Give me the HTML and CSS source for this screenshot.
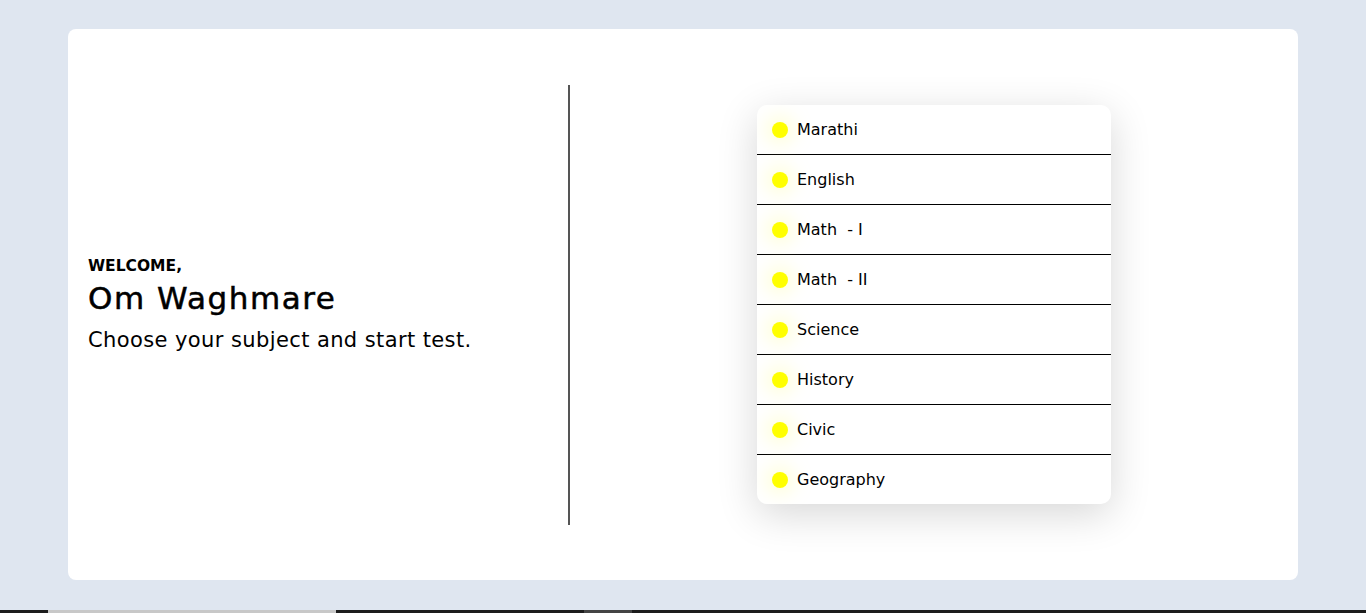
FILE: index.html
```html
<!DOCTYPE html>
<html lang="en">
<head>
<meta charset="utf-8">
<title>Choose subject</title>
<link rel="stylesheet" href="styles.css">
</head>
<body>
<main class="page">
  <section class="card">
    <div class="welcome">
      <h3 class="welcome-label">WELCOME,</h3>
      <h1 class="welcome-name">Om Waghmare</h1>
      <p class="welcome-text">Choose your subject and start test.</p>
    </div>
    <div class="subjects-col">
      <ul class="subjects">
        <li class="subject"><span class="dot"></span><span class="subject-name">Marathi</span></li>
        <li class="subject"><span class="dot"></span><span class="subject-name">English</span></li>
        <li class="subject"><span class="dot"></span><span class="subject-name">Math&nbsp; - I</span></li>
        <li class="subject"><span class="dot"></span><span class="subject-name">Math&nbsp; - II</span></li>
        <li class="subject"><span class="dot"></span><span class="subject-name">Science</span></li>
        <li class="subject"><span class="dot"></span><span class="subject-name">History</span></li>
        <li class="subject"><span class="dot"></span><span class="subject-name">Civic</span></li>
        <li class="subject"><span class="dot"></span><span class="subject-name">Geography</span></li>
      </ul>
    </div>
  </section>
</main>
<div class="taskbar"><span class="tb-seg tb-light"></span><span class="tb-seg tb-gap"></span><span class="tb-seg tb-gray"></span></div>
</body>
</html>
```

FILE: styles.css
```css
* { box-sizing: border-box; }
html, body { margin: 0; padding: 0; }
body {
  background: #dfe6f0;
  font-family: "DejaVu Sans", Inter, sans-serif;
  color: #000;
  height: 613px;
  overflow: hidden;
  position: relative;
}
.page {
  padding-top: 29px;
  display: flex;
  justify-content: center;
}
.card {
  width: 1230px;
  height: 551px;
  background: #fff;
  border-radius: 8px;
  display: flex;
  align-items: center;
}
.welcome {
  width: 500px;
  padding-left: 20px;
}
.welcome-label {
  margin: 0;
  font-size: 15.5px;
  font-weight: 700;
  line-height: 22px;
}
.welcome-name {
  margin: 0;
  font-size: 31px;
  font-weight: 500;
  letter-spacing: 1.5px;
  -webkit-text-stroke: 0.5px #000;
  line-height: 42px;
}
.welcome-text {
  margin: 6px 0 0;
  font-size: 21px;
  font-weight: 400;
  letter-spacing: 0.4px;
  line-height: 30px;
}
.subjects-col {
  flex: 1;
  height: 440px;
  border-left: 2px solid #555;
  display: flex;
  align-items: center;
  justify-content: center;
}
.subjects {
  list-style: none;
  margin: 0;
  padding: 0;
  width: 354px;
  background: #fff;
  border-radius: 10px;
  box-shadow: 0 10px 40px rgba(0,0,0,0.16);
  overflow: hidden;
}
.subject {
  height: 50px;
  display: flex;
  align-items: center;
  padding-left: 15px;
  gap: 9px;
  font-size: 16px;
  border-bottom: 1px solid #000;
}
.subject:last-child { border-bottom: none; height: 49px; }
.dot {
  width: 16px;
  height: 16px;
  border-radius: 50%;
  background: #ffff00;
  box-shadow: 0 0 18px 6px rgba(255,255,150,0.35);
}
.subject-name { line-height: 20px; }
.taskbar {
  position: absolute;
  left: 0;
  right: 0;
  bottom: 0;
  height: 3px;
  background: #1c1c1c;
  display: flex;
}
.tb-seg { height: 3px; }
.tb-light { margin-left: 48px; width: 288px; background: #c8c8c8; }
.tb-gap { width: 248px; }
.tb-gray { width: 48px; background: #444; }
```
